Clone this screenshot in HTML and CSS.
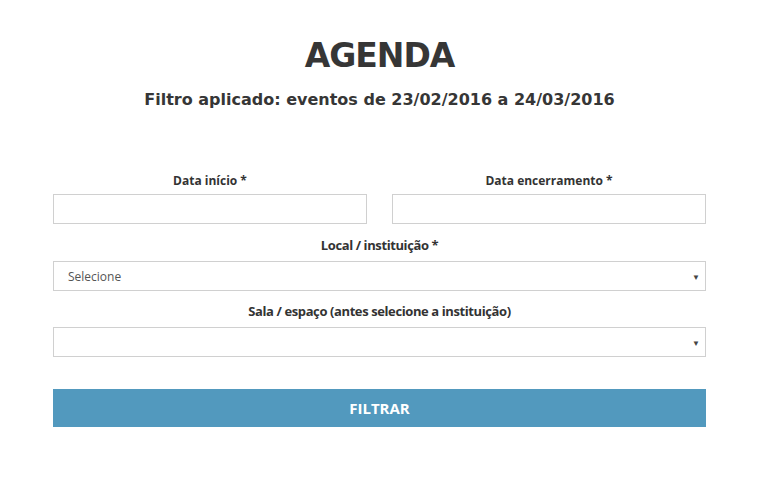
FILE: index.html
```html
<!DOCTYPE html>
<html lang="pt">
<head>
<meta charset="utf-8">
<link rel="stylesheet" href="styles.css">
</head>
<body>
<main class="page">
  <h1 class="title">AGENDA</h1>
  <h2 class="subtitle">Filtro aplicado: eventos de 23/02/2016 a 24/03/2016</h2>
  <form class="form">
    <div class="row">
      <div class="field">
        <label class="label">Data início *</label>
        <input class="input" type="text">
      </div>
      <div class="field">
        <label class="label">Data encerramento *</label>
        <input class="input" type="text">
      </div>
    </div>
    <div class="field">
      <label class="label narrow">Local / instituição *</label>
      <div class="select"><span class="placeholder">Selecione</span><span class="caret">▼</span></div>
    </div>
    <div class="field">
      <label class="label narrow">Sala / espaço (antes selecione a instituição)</label>
      <div class="select"><span class="placeholder"></span><span class="caret">▼</span></div>
    </div>
    <button class="button" type="button">FILTRAR</button>
  </form>
</main>
</body>
</html>
```
FILE: styles.css
```css
* { box-sizing: border-box; }
html, body { margin: 0; padding: 0; background: #fff; }
body { font-family: "Open Sans", sans-serif; color: #333; }
.page { width: 653px; margin-left: 53px; padding-top: 36px; }
.title {
  margin: 0;
  text-align: center;
  font-family: "DejaVu Sans", sans-serif;
  font-weight: bold;
  font-size: 33px;
  line-height: 40px;
  color: #363636;
  letter-spacing: -1px;
}
.subtitle {
  margin: 13px 0 0;
  text-align: center;
  font-family: "DejaVu Sans", sans-serif;
  font-weight: bold;
  font-size: 16px;
  line-height: 22px;
  color: #363636;
}
.form { margin-top: 62px; display: flex; flex-direction: column; }
.row { display: flex; gap: 25px; }
.row .field { flex: 1; }
.field { display: flex; flex-direction: column; }
.label {
  text-align: center;
  font-weight: bold;
  font-size: 12px;
  line-height: 16px;
  padding: 0 0 5px;
  color: #333;
}
.narrow { font-size: 13px; letter-spacing: -0.4px; padding-bottom: 8px; }
.input {
  height: 30px;
  border: 1px solid #d0d0d0;
  background: #fff;
  margin: 0 0 13px;
  font-family: inherit;
}
.select {
  height: 30px;
  border: 1px solid #d0d0d0;
  display: flex;
  align-items: center;
  justify-content: space-between;
  padding: 0 5px 0 14px;
  margin-bottom: 12px;
}
.placeholder { font-size: 12px; color: #555; }
.caret { font-size: 8px; color: #444; }
.button {
  margin-top: 20px;
  height: 38px;
  border: 0;
  background: #5299be;
  color: #fff;
  font-family: "Open Sans", sans-serif;
  font-weight: bold;
  font-size: 15px;
}
```
